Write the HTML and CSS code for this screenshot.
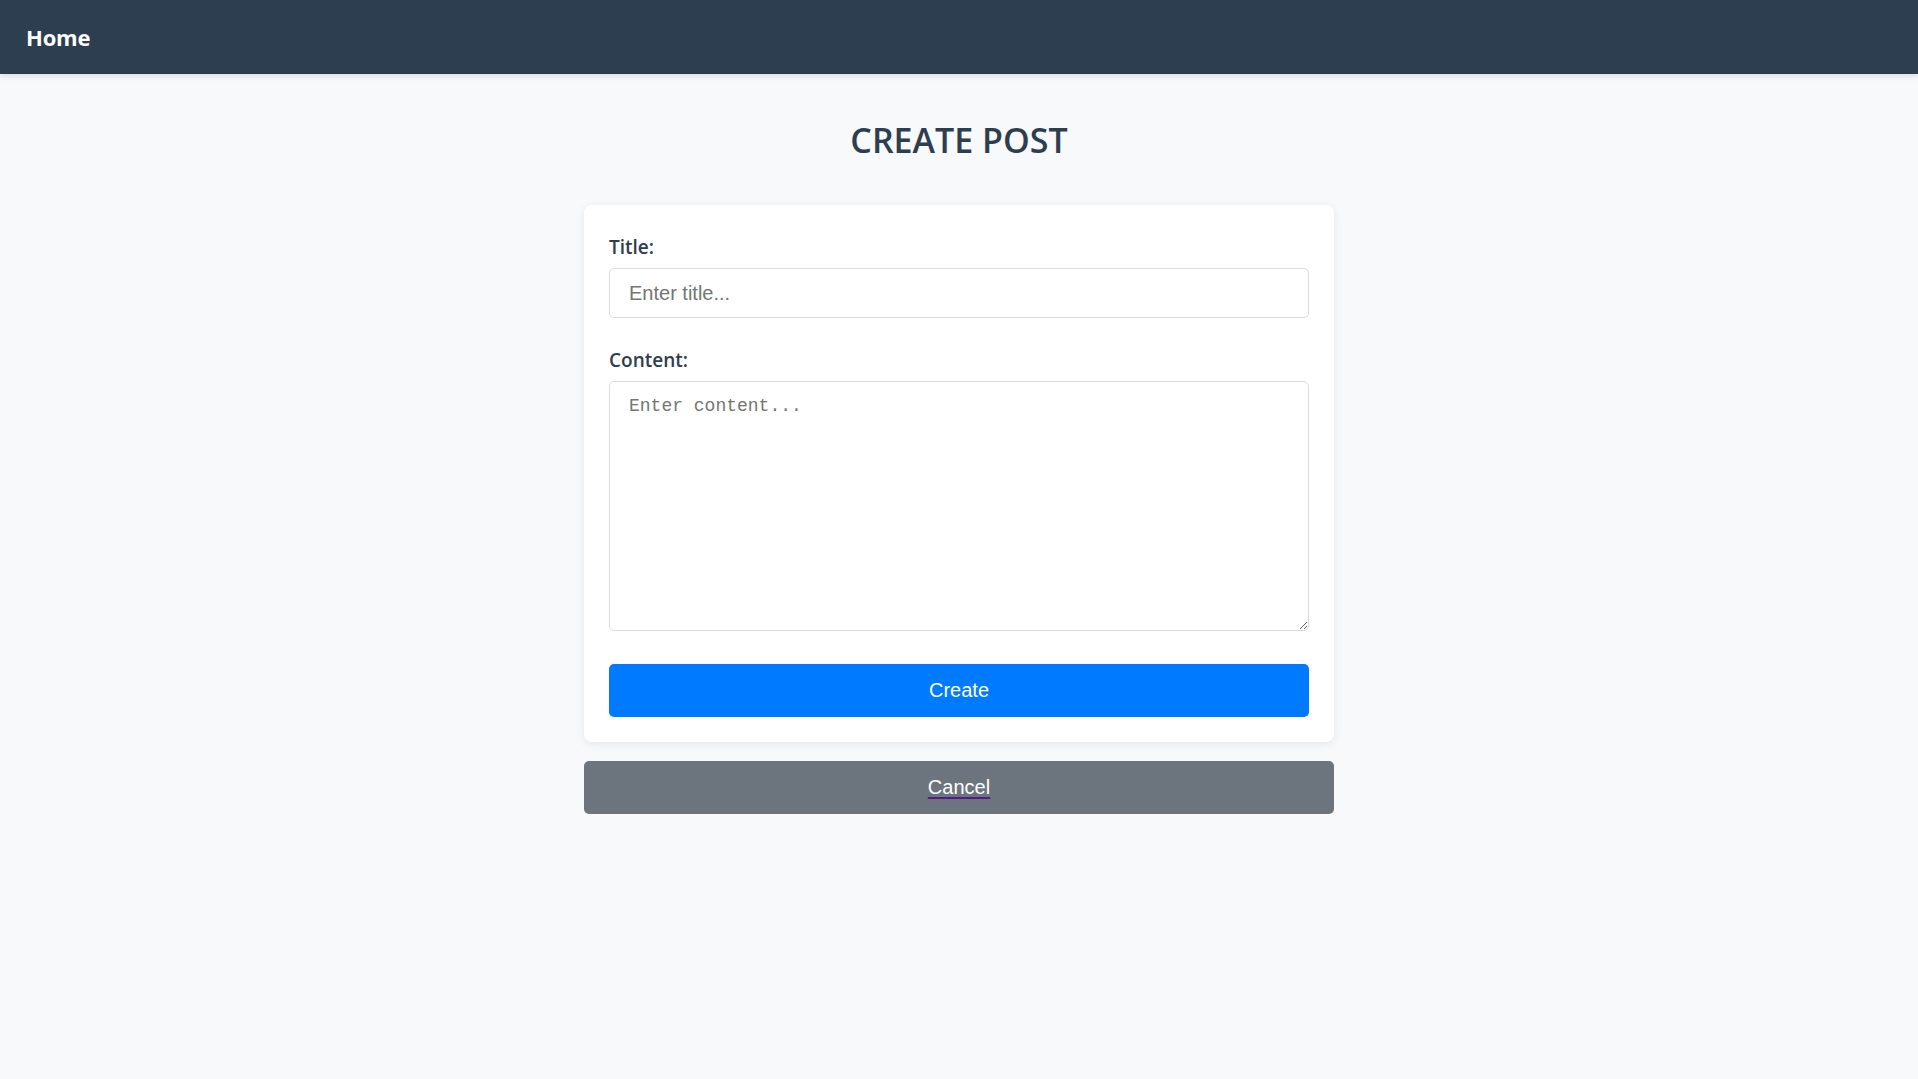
FILE: index.html
```html
<!DOCTYPE html>
<html lang="en">
<head>
<meta charset="utf-8">
<title>Create Post</title>
<link rel="stylesheet" href="styles.css">
</head>
<body>
<nav class="navbar">
  <a class="brand" href="#">Home</a>
</nav>
<main class="page">
  <h1 class="page-title">CREATE POST</h1>
  <div class="column">
    <form class="card">
      <label class="label" for="title">Title:</label>
      <input class="input" id="title" type="text" placeholder="Enter title...">
      <label class="label label-content" for="content">Content:</label>
      <textarea class="textarea" id="content" placeholder="Enter content..."></textarea>
      <button class="btn btn-primary" type="button">Create</button>
    </form>
    <a class="btn btn-secondary" href="#"><span class="cancel-text">Cancel</span></a>
  </div>
</main>
</body>
</html>
```
FILE: styles.css
```css
* { box-sizing: border-box; }
html, body { margin: 0; padding: 0; }
body {
  background: #f8f9fa;
  font-family: "Open Sans", "Noto Sans", sans-serif;
  color: #2c3e50;
  min-height: 1079px;
}
.navbar {
  height: 74px;
  background: #2c3e50;
  display: flex;
  align-items: center;
  padding: 0 26px;
  box-shadow: 0 2px 6px rgba(0,0,0,0.12);
}
.brand {
  color: #ffffff;
  text-decoration: none;
  font-weight: 700;
  font-size: 22px;
  letter-spacing: -0.2px;
}
.page {
  display: flex;
  flex-direction: column;
  align-items: center;
  padding-top: 42px;
}
.page-title {
  margin: 0 0 41px;
  font-size: 34px;
  font-weight: 600;
  line-height: 48px;
  color: #2c3e50;
}
.column {
  width: 750px;
  display: flex;
  flex-direction: column;
  gap: 19px;
}
.card {
  background: #ffffff;
  border-radius: 8px;
  box-shadow: 0 2px 10px rgba(0,0,0,0.08);
  padding: 29px 25px 25px;
  display: flex;
  flex-direction: column;
}
.label {
  font-size: 19px;
  font-weight: 600;
  line-height: 26px;
  margin-bottom: 8px;
  color: #2c3e50;
}
.label-content { margin-top: 29px; }
.input {
  height: 50px;
  border: 1px solid #dcdcdc;
  border-radius: 5px;
  padding: 0 19px;
  font-family: "Liberation Sans", Arial, sans-serif;
  font-size: 20px;
  color: #333;
  outline: none;
}
.input::placeholder { color: #757575; }
.textarea {
  height: 250px;
  border: 1px solid #dcdcdc;
  border-radius: 5px;
  padding: 14px 19px;
  font-family: "Liberation Mono", "DejaVu Sans Mono", monospace;
  font-size: 18px;
  color: #333;
  resize: vertical;
  outline: none;
  display: block;
}
.textarea::placeholder { color: #757575; }
.btn {
  height: 53px;
  border: none;
  border-radius: 5px;
  display: flex;
  align-items: center;
  justify-content: center;
  font-family: "Liberation Sans", Arial, sans-serif;
  font-size: 20px;
  color: #ffffff;
  cursor: pointer;
}
.btn-primary {
  background: #007bff;
  margin-top: 33px;
}
.btn-secondary {
  background: #6c757d;
  text-decoration: none;
}
.cancel-text {
  text-decoration: underline;
  text-decoration-color: #551a8b;
  text-decoration-thickness: 2px;
  text-underline-offset: 3px;
}
```
